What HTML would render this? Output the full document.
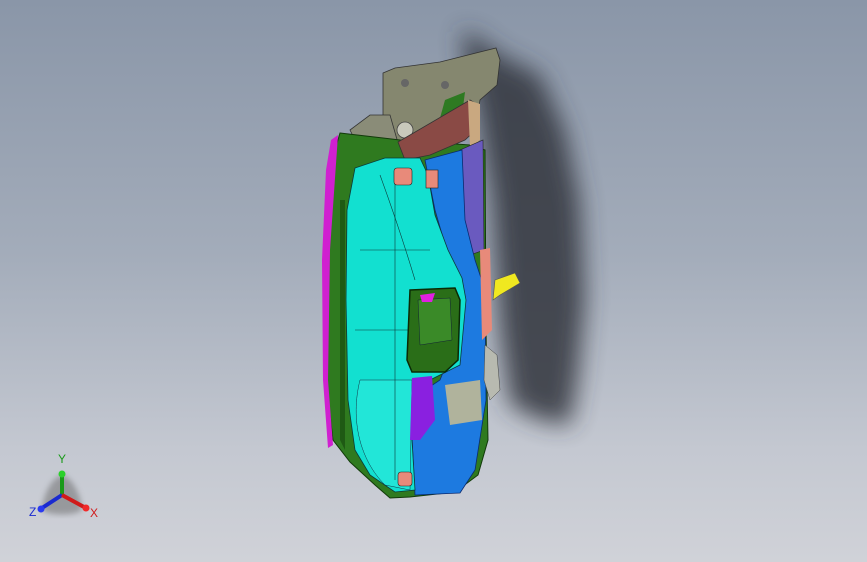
<!DOCTYPE html>
<html><head><meta charset="utf-8"><style>
html,body{margin:0;padding:0;width:867px;height:562px;overflow:hidden}
body{background:linear-gradient(180deg,#8a96a8 0%,#a3acba 45%,#c4c8d1 80%,#d0d2d8 100%)}
svg{position:absolute;left:0;top:0}
</style></head><body>
<svg width="867" height="562" viewBox="0 0 867 562">
<defs>
<filter id="b" x="-50%" y="-50%" width="200%" height="200%"><feGaussianBlur stdDeviation="12"/></filter>
<filter id="b2"><feGaussianBlur stdDeviation="3"/></filter>
</defs>
<!-- shadow -->
<path d="M462,30 L480,40 L500,55 L540,75 L565,130 L580,200 L585,300 L578,380 L570,425 L540,420 L510,405 L500,330 L492,200 L478,110 L465,60 Z" fill="#33363d" opacity="0.85" filter="url(#b)"/>
<!-- top bracket -->
<path d="M383,73 L395,68 L440,62 L496,48 L500,60 L497,85 L480,100 L475,130 L430,140 L400,150 L383,140 Z" fill="#85876f" stroke="#333" stroke-width="0.8"/>
<path d="M350,130 L370,115 L390,115 L400,150 L360,150 Z" fill="#8a8c78" stroke="#333" stroke-width="0.8"/>
<circle cx="405" cy="130" r="8" fill="#c9c9bc" stroke="#444" stroke-width="0.8"/>
<circle cx="405" cy="83" r="4" fill="#666"/><circle cx="445" cy="85" r="4" fill="#666"/>
<path d="M445,100 L465,92 L462,115 L440,118 Z" fill="#2e7a22"/>
<!-- green body -->
<path d="M340,133 L400,140 L470,145 L485,150 L486,330 L488,440 L478,475 L455,492 L410,497 L390,498 L375,485 L350,462 L333,440 L326,380 L324,300 L326,210 L332,160 Z" fill="#2f7a1f" stroke="#123a0a" stroke-width="1"/>
<path d="M331,140 L338,135 L330,250 L328,380 L333,445 L328,448 L323,380 L322,260 L326,170 Z" fill="#d020d0"/>
<path d="M340,200 L345,200 L345,450 L340,440 Z" fill="#1f5a14"/>
<!-- brown/pink top piece -->
<path d="M398,142 L470,100 L478,105 L478,128 L465,140 L430,155 L405,160 Z" fill="#8a4a45" stroke="#333" stroke-width="0.8"/>
<path d="M468,100 L480,104 L480,140 L470,148 Z" fill="#c9a880"/>
<!-- purple strip -->
<path d="M460,150 L483,140 L484,250 L470,255 L462,220 Z" fill="#6a5abf" stroke="#222" stroke-width="0.6"/>
<!-- blue region -->
<path d="M425,160 L462,150 L465,220 L475,260 L485,290 L486,400 L475,470 L460,493 L415,495 L410,400 L440,380 L460,330 L462,290 L448,255 L435,210 Z" fill="#1d7ae0" stroke="#0a2a70" stroke-width="0.8"/>
<!-- cyan -->
<path d="M355,168 L385,158 L420,158 L428,175 L435,215 L448,250 L462,278 L466,300 L460,365 L430,380 L415,395 L412,440 L415,490 L395,492 L370,475 L355,450 L348,400 L346,300 L347,210 Z" fill="#12e0d0" stroke="#0a3a3a" stroke-width="0.8"/>
<path d="M360,380 C350,420 360,460 385,485 L410,490 L412,380 Z" fill="#2ae8dc" stroke="#134" stroke-width="0.5" fill-opacity="0.7"/>
<g stroke="#0b3a3a" stroke-width="0.6" fill="none">
<path d="M395,170 L395,480"/><path d="M360,250 L430,250"/><path d="M355,330 L410,330"/><path d="M380,175 Q400,230 415,280"/>
</g>
<!-- window -->
<path d="M410,290 L455,288 L460,300 L458,360 L445,372 L412,372 L407,360 Z" fill="#2a6e18" stroke="#0a2a05" stroke-width="1.5"/>
<path d="M418,300 L450,298 L452,340 L420,345 Z" fill="#3a8a28" stroke="#123" stroke-width="0.5"/>
<path d="M420,295 L435,293 L432,302 L422,302 Z" fill="#e020e0"/>
<!-- purple lower -->
<path d="M412,378 L432,376 L435,420 L420,440 L410,440 Z" fill="#8a20e0"/>
<!-- pink bits -->
<rect x="394" y="168" width="18" height="17" rx="3" fill="#e88a7a" stroke="#222" stroke-width="0.6"/>
<rect x="426" y="170" width="12" height="18" fill="#e88a7a" stroke="#222" stroke-width="0.6"/>
<rect x="398" y="472" width="14" height="14" rx="3" fill="#e88a7a" stroke="#222" stroke-width="0.6"/>
<path d="M480,250 L490,248 L492,330 L482,340 Z" fill="#e88a7a"/>
<path d="M485,345 L497,355 L500,390 L490,400 L484,380 Z" fill="#b8bab0" stroke="#444" stroke-width="0.5"/>
<path d="M445,385 L480,380 L482,420 L450,425 Z" fill="#b0b39c"/>
<!-- yellow -->
<path d="M495,280 L515,273 L520,283 L500,295 L493,300 Z" fill="#f0e820" stroke="#555" stroke-width="0.6"/>
<!-- triad -->
<path d="M62,475 C74,478 82,500 82,510 C75,516 49,516 42,510 C42,500 50,478 62,475 Z" fill="#666" opacity="0.5" filter="url(#b2)"/>
<line x1="62" y1="495" x2="62" y2="475" stroke="#1a9a1a" stroke-width="4"/>
<circle cx="62" cy="474" r="3.5" fill="#2ad02a"/>
<line x1="62" y1="495" x2="42" y2="508" stroke="#1a2ad0" stroke-width="4"/>
<circle cx="41" cy="509" r="3.5" fill="#2a3af0"/>
<line x1="62" y1="495" x2="84" y2="507" stroke="#d01a1a" stroke-width="4"/>
<circle cx="86" cy="508" r="3.5" fill="#f02a2a"/>
<text x="58" y="463" font-family="Liberation Sans,sans-serif" font-size="12" fill="#1a9a1a">Y</text>
<text x="29" y="516" font-family="Liberation Sans,sans-serif" font-size="12" fill="#1a2ad0">Z</text>
<text x="90" y="517" font-family="Liberation Sans,sans-serif" font-size="12" fill="#d01a1a">X</text>
</svg>
</body></html>
